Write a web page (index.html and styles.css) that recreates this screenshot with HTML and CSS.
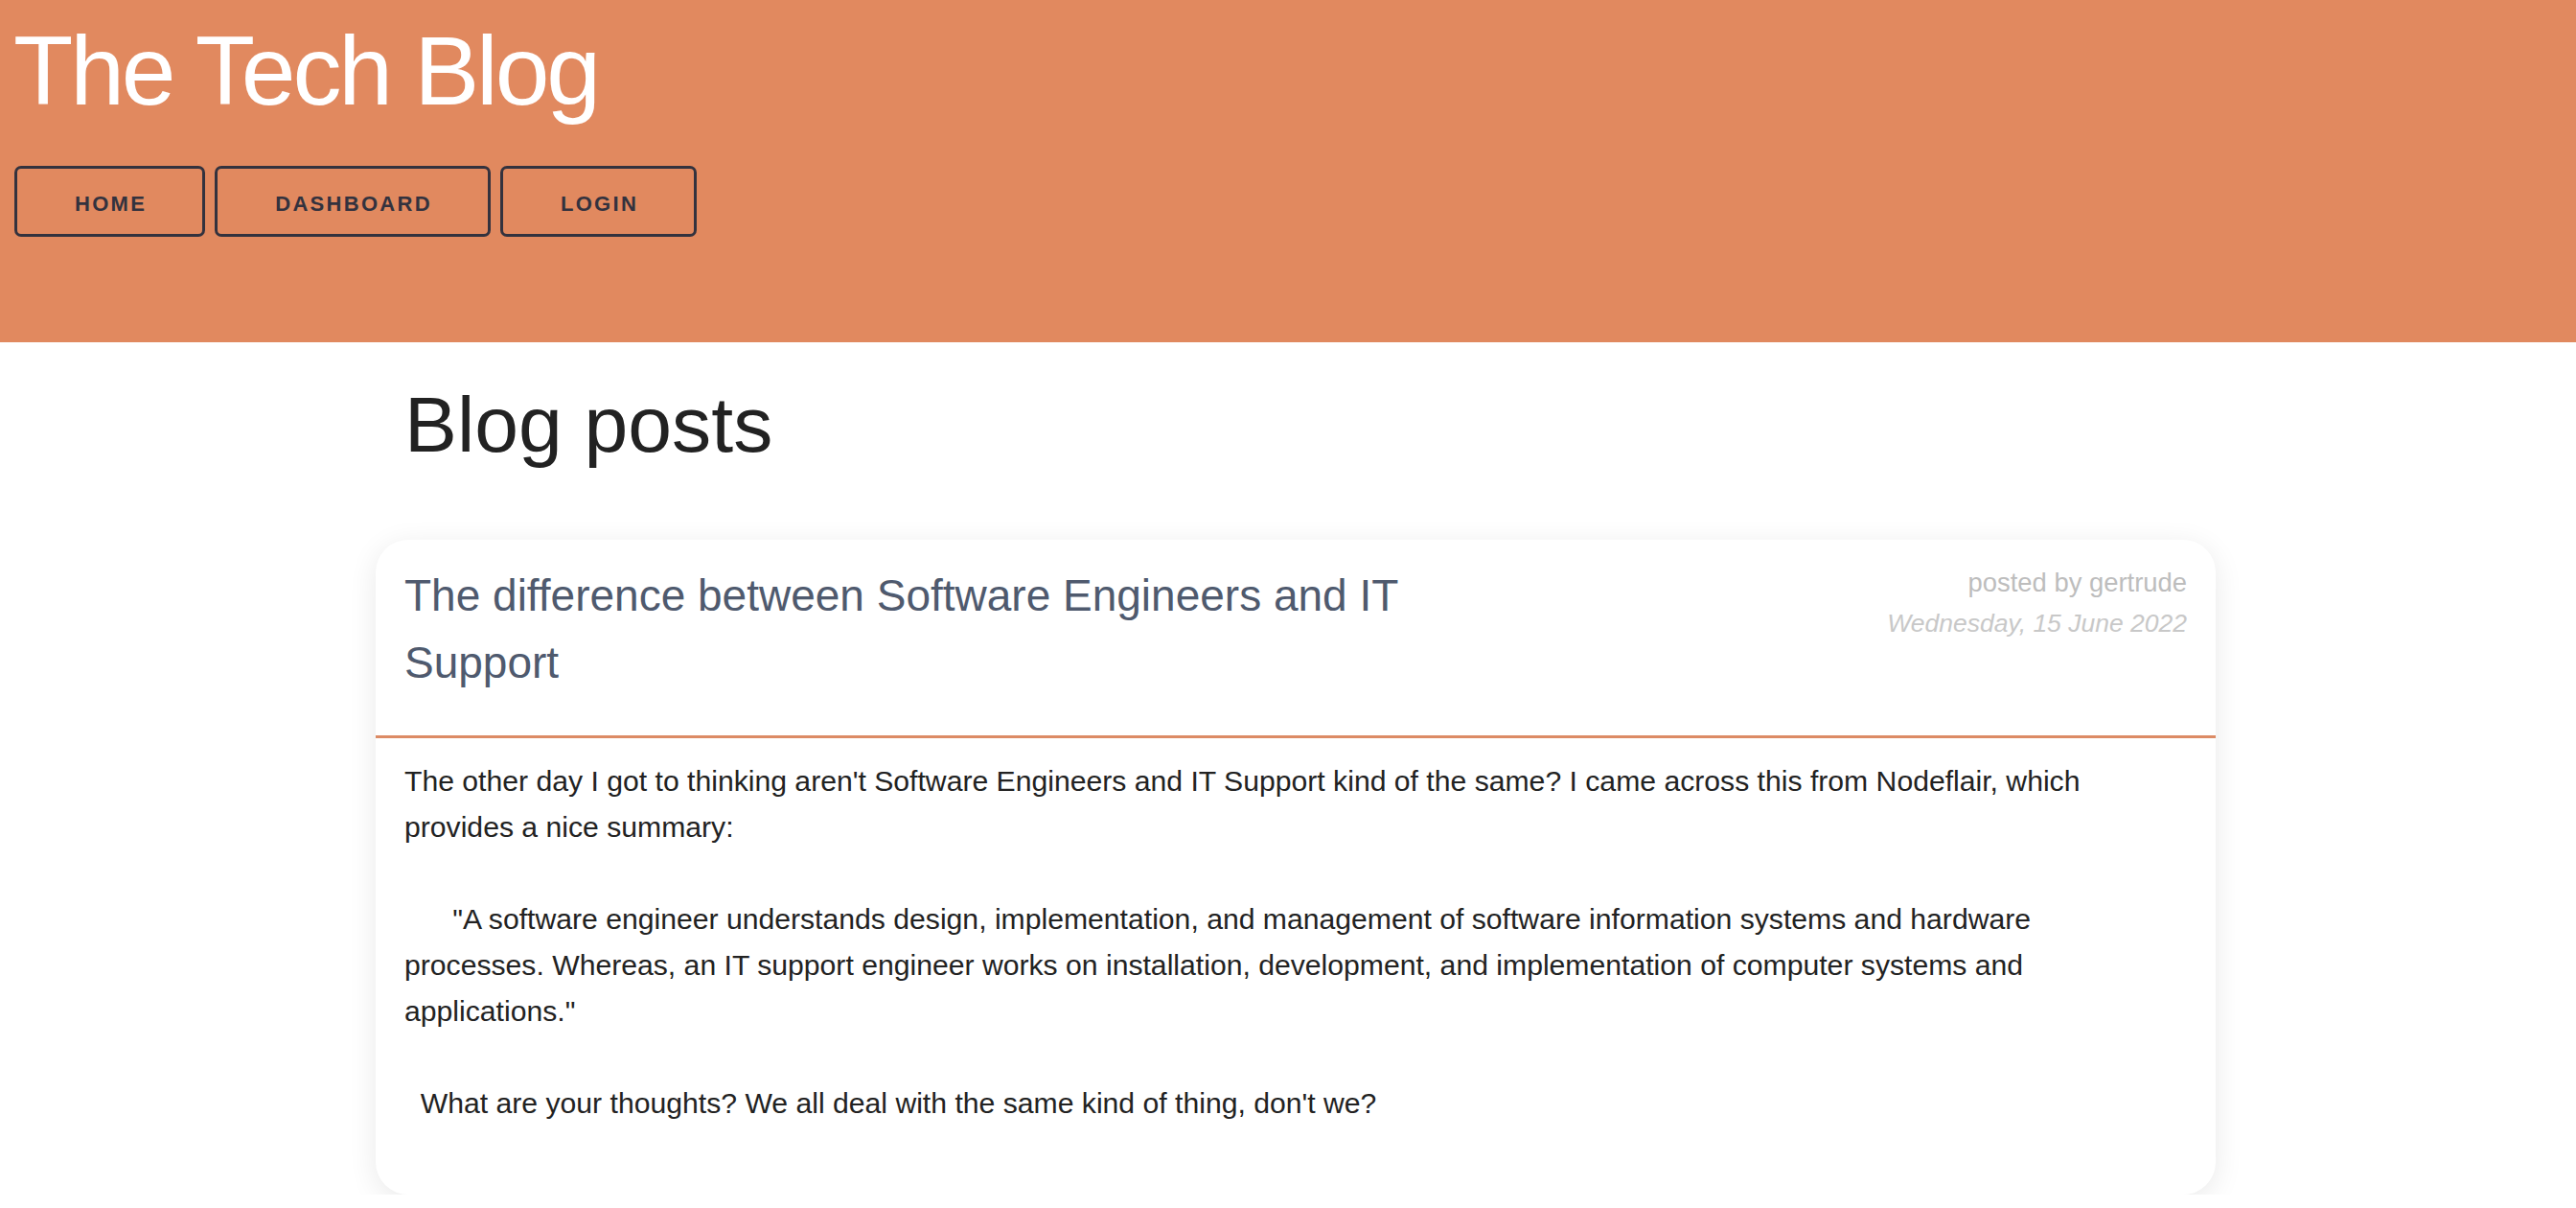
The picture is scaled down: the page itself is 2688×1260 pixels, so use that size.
FILE: index.html
```html
<!DOCTYPE html>
<html lang="en">
<head>
<meta charset="utf-8">
<title>The Tech Blog</title>
<link rel="stylesheet" href="styles.css">
</head>
<body>
<header class="site-header">
  <h1 class="site-title">The Tech Blog</h1>
  <nav class="site-nav">
    <a class="nav-btn" href="#">Home</a>
    <a class="nav-btn" href="#">Dashboard</a>
    <a class="nav-btn" href="#">Login</a>
  </nav>
</header>
<div class="page">
  <main class="content">
    <h2 class="page-heading">Blog posts</h2>
    <article class="post-card">
      <div class="post-head">
        <h3 class="post-title">The difference between Software Engineers and IT Support</h3>
        <div class="post-meta">
          <div class="post-author">posted by gertrude</div>
          <div class="post-date">Wednesday, 15 June 2022</div>
        </div>
      </div>
      <div class="post-body">
        <p class="post-text">The other day I got to thinking aren't Software Engineers and IT Support kind of the same? I came across this from Nodeflair, which provides a nice summary:

      "A software engineer understands design, implementation, and management of software information systems and hardware processes. Whereas, an IT support engineer works on installation, development, and implementation of computer systems and applications."

  What are your thoughts? We all deal with the same kind of thing, don't we?</p>
      </div>
    </article>
  </main>
</div>
</body>
</html>
```

FILE: styles.css
```css
* {
  box-sizing: border-box;
}

html, body {
  margin: 0;
  padding: 0;
  background: #ffffff;
  font-family: "Liberation Sans", Arial, Helvetica, sans-serif;
}

.site-header {
  height: 357px;
  padding: 17px 14px 0;
  background: #e1895f;
}

.site-title {
  margin: 0;
  font-size: 102px;
  line-height: 115px;
  font-weight: normal;
  letter-spacing: -3.1px;
  color: #ffffff;
}

.site-nav {
  display: flex;
  gap: 10px;
  margin-top: 41px;
  padding-left: 1px;
}

.nav-btn {
  display: flex;
  align-items: center;
  justify-content: center;
  height: 74px;
  padding: 5px 58px 0 60px;
  border: 3.6px solid #33323e;
  border-radius: 7px;
  color: #33323e;
  font-size: 22px;
  font-weight: bold;
  letter-spacing: 2.3px;
  text-transform: uppercase;
  text-decoration: none;
}

.page {
  padding-left: 16px;
}

.content {
  width: 1920px;
  margin: 0 auto;
}

.page-heading {
  margin: 36px 0 71px;
  padding-left: 30px;
  font-size: 82.3px;
  line-height: 98.7px;
  font-weight: normal;
  color: #222222;
}

.post-card {
  background: #ffffff;
  border-radius: 34px;
  box-shadow: 0 6px 30px rgba(0, 0, 0, 0.09);
  overflow: hidden;
}

.post-head {
  display: flex;
  justify-content: space-between;
  align-items: flex-start;
  padding: 23px 30px 41px;
  border-bottom: 3.4px solid #dc8b65;
}

.post-title {
  max-width: 60%;
  margin: 0;
  font-size: 46px;
  line-height: 70px;
  font-weight: normal;
  color: #4f5a6e;
}

.post-meta {
  text-align: right;
  font-size: 27.4px;
  line-height: 43px;
}

.post-author {
  color: #bdbdbd;
}

.post-date {
  color: #c8c8c8;
  font-style: italic;
  font-size: 26.5px;
}

.post-body {
  padding: 21px 46px 71px 30px;
}

.post-text {
  margin: 0;
  white-space: pre-wrap;
  font-size: 30.17px;
  line-height: 48px;
  color: #222222;
}
```
